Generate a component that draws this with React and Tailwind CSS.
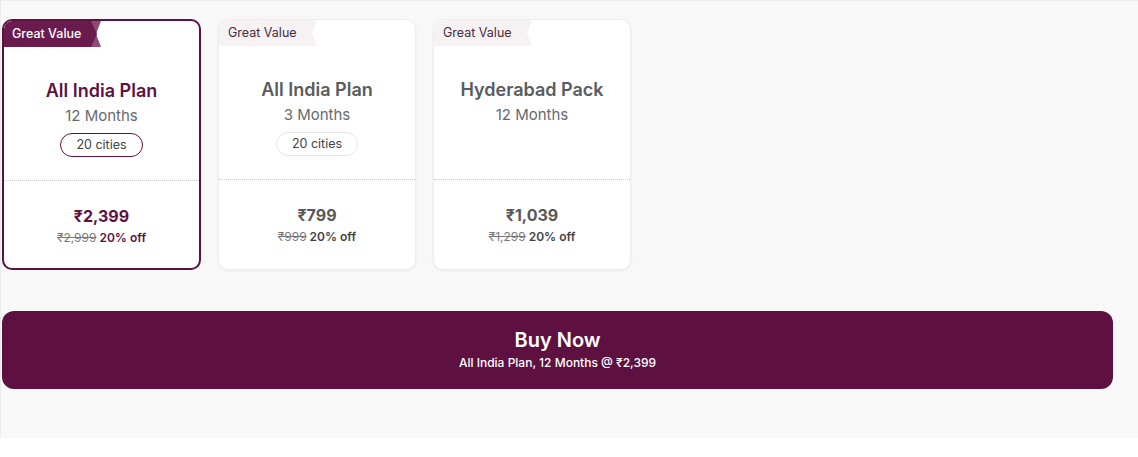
import React, { useState } from 'react';

const plans = [
  { id: 'ai12', name: 'All India Plan', duration: '12 Months', cities: '20 cities', price: '₹2,399', mrp: '₹2,999', off: '20% off' },
  { id: 'ai3', name: 'All India Plan', duration: '3 Months', cities: '20 cities', price: '₹799', mrp: '₹999', off: '20% off' },
  { id: 'hyd12', name: 'Hyderabad Pack', duration: '12 Months', cities: null, price: '₹1,039', mrp: '₹1,299', off: '20% off' },
];

function Badge({ active }) {
  return (
    <div className="flex h-[26px] items-stretch">
      <div
        className={
          active
            ? 'flex items-center pl-[8px] pr-[8px] text-[12.5px] font-medium text-white bg-[#6a1b4d] rounded-tl-[8px]'
            : 'flex items-center pl-[9px] pr-[8px] text-[12.5px] font-normal text-[#4a2a3c] bg-[#f6f2f4] rounded-tl-[10px]'
        }
      >
        Great Value
      </div>
      <svg width="12" height="26" viewBox="0 0 12 26" className="block">
        {active ? (
          <>
            <polygon points="0,0 12,0 7,13 12,26 0,26" fill="#8c4d74" />
            <polygon points="0,0 2,0 8,13 2,26 0,26" fill="#6a1b4d" />
          </>
        ) : (
          <polygon points="0,0 12,0 7,13 12,26 0,26" fill="#f6f2f4" />
        )}
      </svg>
    </div>
  );
}

function PlanCard({ plan, active, onSelect }) {
  return (
    <div
      onClick={onSelect}
      className={
        active
          ? 'w-[199px] h-[251px] rounded-[10px] border-2 border-[#5e1140] bg-white flex flex-col cursor-pointer overflow-hidden'
          : 'w-[198px] h-[251px] rounded-[10px] border border-[#ededed] bg-white flex flex-col cursor-pointer overflow-hidden shadow-[0_1px_3px_rgba(0,0,0,0.06)]'
      }
    >
      {/* TOP */}
      <div className="h-[160px] flex-none border-b border-dotted border-[#c9c9c9]">
        <Badge active={active} />
        <div className="flex flex-col items-center pt-[32px]">
          <div className={`text-[18px] leading-[24px] font-semibold ${active ? 'text-[#5e1140]' : 'text-[#585c60]'}`}>
            {plan.name}
          </div>
          <div className="text-[15px] leading-[22px] text-[#666a6e] mt-[2px]">{plan.duration}</div>
          {plan.cities && (
            <div
              className={`mt-[6px] h-[24px] px-[15px] rounded-full flex items-center text-[12.5px] text-[#444] ${
                active ? 'border border-[#5e1140]' : 'border border-[#e6e6e6]'
              }`}
            >
              {plan.cities}
            </div>
          )}
        </div>
      </div>

      {/* PRICE */}
      <div className="flex flex-col items-center pt-[25px]">
        <div className={`text-[16px] leading-[20px] font-bold ${active ? 'text-[#5e1140]' : 'text-[#585858]'}`}>
          {plan.price}
        </div>
        <div className="text-[12px] leading-[18px] mt-[3px] flex gap-[3px]">
          <span className="line-through text-[#777]">{plan.mrp}</span>
          <span className={`font-semibold ${active ? 'text-[#5e1140]' : 'text-[#444]'}`}>{plan.off}</span>
        </div>
      </div>
    </div>
  );
}

export default function App() {
  const [selected, setSelected] = useState('ai12');
  const current = plans.find(p => p.id === selected);

  return (
    <div className="w-full bg-white" style={{ fontFamily: 'Inter, "Noto Sans", sans-serif' }}>
      <div className="h-[438px] bg-[#f8f8f8] border-t border-l border-[#ececec] pl-[1px] pr-[25px] pt-[18px]">
        {/* PLAN CARDS */}
        <div className="flex gap-[17px]">
          {plans.map(p => (
            <PlanCard key={p.id} plan={p} active={p.id === selected} onSelect={() => setSelected(p.id)} />
          ))}
        </div>

        {/* BUY BUTTON */}
        <button className="mt-[41px] w-full h-[78px] rounded-[12px] bg-[#5e1140] text-white flex flex-col items-center pt-[16px]">
          <span className="text-[20px] leading-[26px] font-semibold">Buy Now</span>
          <span className="text-[12px] leading-[16px] font-medium mt-[2px]">
            {current.name}, {current.duration} @ {current.price}
          </span>
        </button>
      </div>
    </div>
  );
}
